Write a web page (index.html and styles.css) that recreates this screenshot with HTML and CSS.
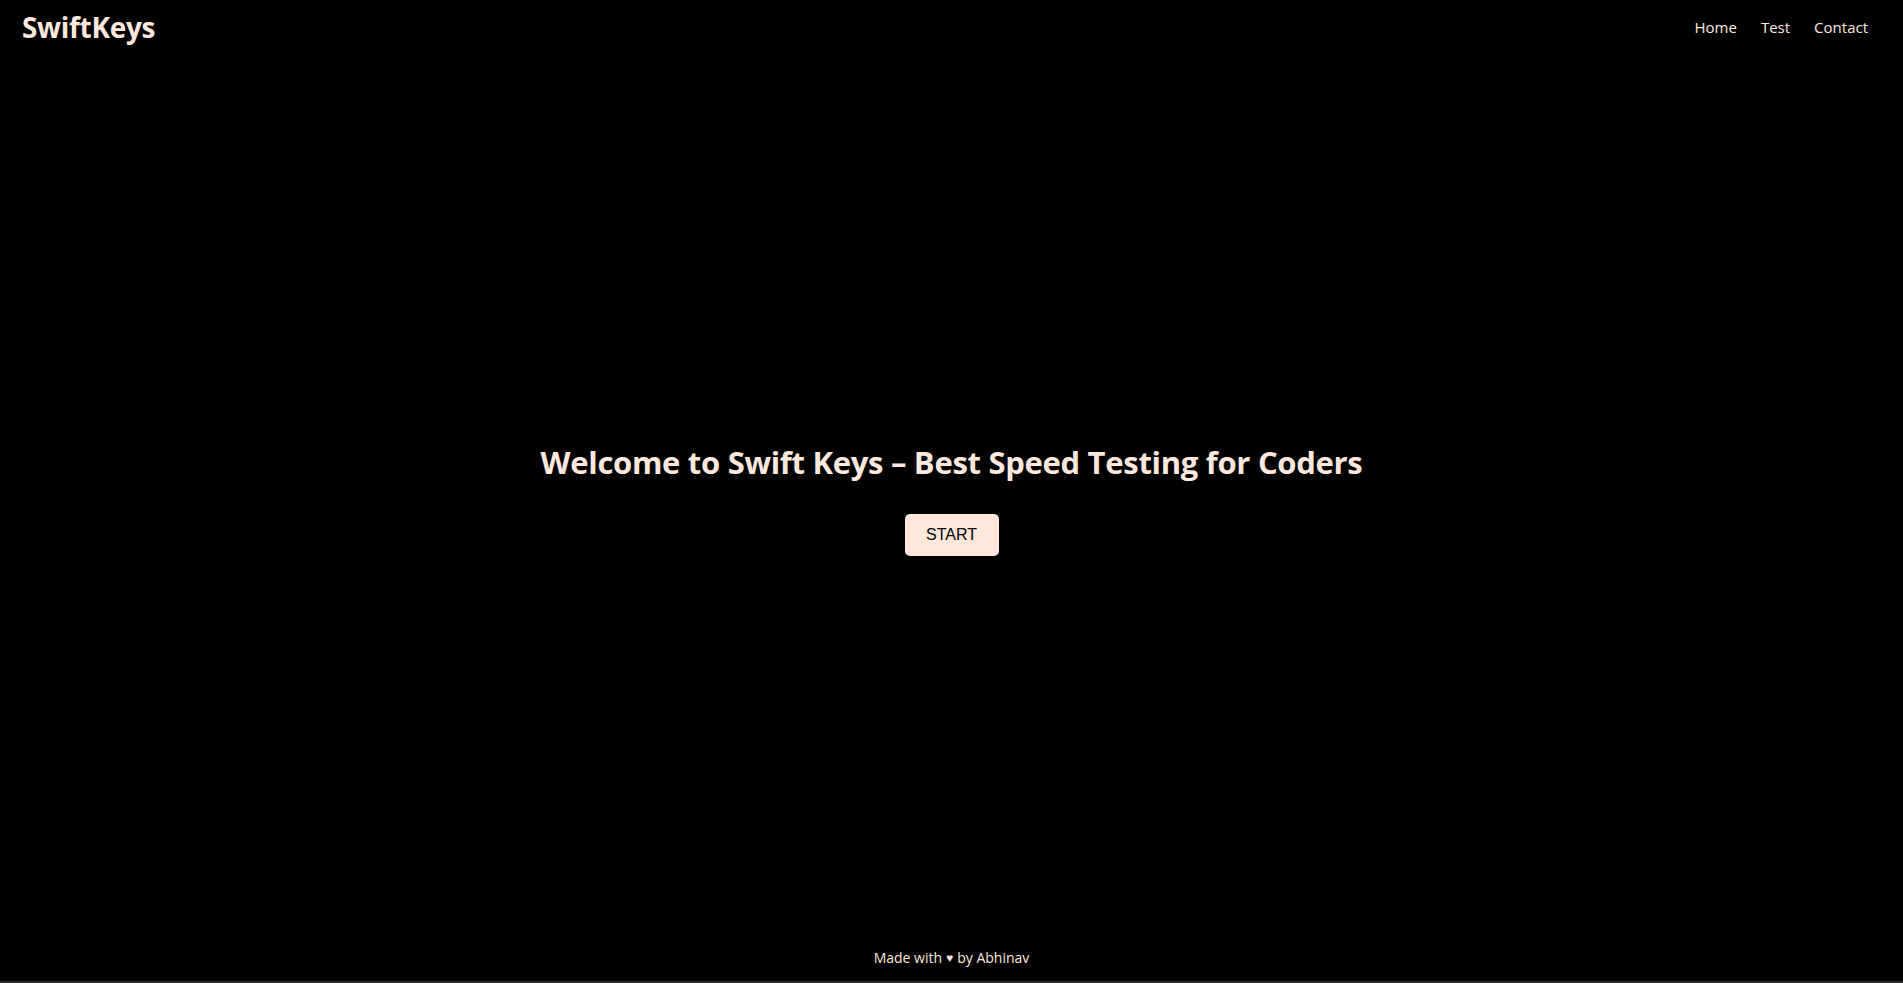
FILE: index.html
```html
<!DOCTYPE html>
<html lang="en">
<head>
<meta charset="utf-8">
<title>SwiftKeys</title>
<link rel="stylesheet" href="styles.css">
</head>
<body>
<div class="page">
  <header class="topbar">
    <div class="logo">SwiftKeys</div>
    <nav class="nav">
      <a href="#" class="nav-link">Home</a>
      <a href="#" class="nav-link">Test</a>
      <a href="#" class="nav-link">Contact</a>
    </nav>
  </header>
  <main class="hero">
    <h1 class="hero-title">Welcome to Swift Keys – Best Speed Testing for Coders</h1>
    <button class="start-btn" type="button">START</button>
  </main>
  <footer class="footer">Made with <span class="heart">♥</span> by Abhinav</footer>
</div>
</body>
</html>
```
FILE: styles.css
```css
* { box-sizing: border-box; }
html, body { margin: 0; padding: 0; background: #000; }
body {
  font-family: "Open Sans", "Noto Sans", sans-serif;
  color: #fde9de;
  height: 983px;
  overflow: hidden;
}
.page {
  display: flex;
  flex-direction: column;
  height: 983px;
  border-bottom: 2px solid #2a2a2a;
}
.topbar {
  display: flex;
  justify-content: space-between;
  align-items: center;
  height: 54px;
  padding: 0 35px 0 22px;
}
.logo {
  font-size: 28px;
  font-weight: 700;
  letter-spacing: -0.3px;
  color: #fde9de;
}
.nav {
  display: flex;
  gap: 24px;
}
.nav-link {
  color: #fde9de;
  text-decoration: none;
  font-size: 15px;
}
.hero {
  flex: 1;
  display: flex;
  flex-direction: column;
  align-items: center;
  justify-content: center;
  padding-top: 16px;
}
.hero-title {
  margin: 0 0 31px;
  font-size: 31px;
  font-weight: 700;
  letter-spacing: -0.3px;
  color: #fde9de;
}
.start-btn {
  font-family: "Liberation Sans", Arial, sans-serif;
  font-size: 16px;
  color: #000;
  background: #ffe7dc;
  border: none;
  border-radius: 5px;
  width: 94px;
  height: 42px;
  padding: 0;
}
.footer {
  height: 54px;
  padding-top: 6px;
  display: flex;
  align-items: center;
  justify-content: center;
  font-size: 14px;
  gap: 4px;
  color: #fde9de;
}
.heart { font-size: 12px; }
```
